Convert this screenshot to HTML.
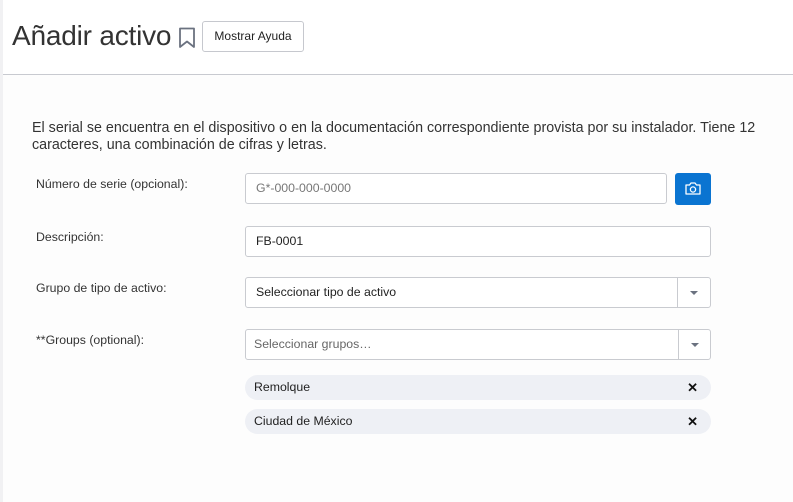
<!DOCTYPE html>
<html><head><meta charset="utf-8"><style>
body{margin:0;width:793px;height:502px;background:#fdfdfd;font-family:"Liberation Sans",sans-serif;position:relative;overflow:hidden;color:#333}
.hdr{position:absolute;left:0;top:0;width:793px;height:74px;background:#fff;border-bottom:1px solid #c8cad0}
.side{position:absolute;left:0;top:0;width:3px;height:502px;background:#f1f1f3}
h1{position:absolute;left:12px;top:20px;margin:0;font-weight:normal;font-size:28px;color:#333;letter-spacing:-0.2px}
.btn{position:absolute;left:202px;top:21px;width:100px;height:29px;border:1px solid #c6c8ce;border-radius:3px;background:#fff;font-size:12px;line-height:29px;text-align:center;color:#222}
p{position:absolute;left:32px;top:120px;margin:0;font-size:14.3px;line-height:17px;color:#333;white-space:nowrap}
.lbl{position:absolute;left:36px;font-size:12.3px;color:#333}
.in{position:absolute;left:245px;height:31px;border:1px solid #c9cbd0;border-radius:3px;background:#fff;font-size:12.3px;line-height:29px;padding-left:10px;box-sizing:border-box}
.dd{position:absolute;right:0;top:0;width:32px;height:29px;border-left:1px solid #c9cbd0}
.dd:after{content:"";position:absolute;left:12px;top:13px;border-left:4px solid transparent;border-right:4px solid transparent;border-top:4px solid #6b7280}
.cam{position:absolute;left:675px;top:173px;width:36px;height:32px;background:#0a74d1;border-radius:3px}
.chip{position:absolute;left:245px;width:466px;height:25px;border-radius:13px;background:#eef0f5;font-size:12.3px;line-height:25px;color:#222}
.chip span{position:absolute;left:9px}
.chip b{position:absolute;right:13px;top:0;font-size:13px;color:#111}
</style></head><body>
<div class="hdr"></div><div class="side"></div>
<h1>Añadir activo</h1>
<svg style="position:absolute;left:178px;top:27px" width="18" height="22" viewBox="0 0 18 22"><path d="M2 1.5h14v18.5l-7-5.5-7 5.5z" fill="none" stroke="#6b7280" stroke-width="1.8" stroke-linejoin="round"/></svg>
<div class="btn">Mostrar Ayuda</div>
<p>El serial se encuentra en el dispositivo o en la documentación correspondiente provista por su instalador. Tiene 12<br>caracteres, una combinación de cifras y letras.</p>
<div class="lbl" style="top:177px">Número de serie (opcional):</div>
<div class="in" style="top:173px;width:422px;color:#777">G*-000-000-0000</div>
<div class="cam"><svg width="36" height="32" viewBox="0 0 36 32"><path d="M11 12h3.5l1.5-2h4l1.5 2h3.5v9h-14z" fill="none" stroke="#fff" stroke-width="1.3" stroke-linejoin="round"/><circle cx="18" cy="16.5" r="2.6" fill="none" stroke="#fff" stroke-width="1.3"/></svg></div>
<div class="lbl" style="top:230px">Descripción:</div>
<div class="in" style="top:226px;width:466px;color:#222">FB-0001</div>
<div class="lbl" style="top:281px">Grupo de tipo de activo:</div>
<div class="in" style="top:277px;width:466px;color:#222">Seleccionar tipo de activo<div class="dd"></div></div>
<div class="lbl" style="top:333px">**Groups (optional):</div>
<div class="in" style="top:329px;width:466px;color:#666;padding-left:8px">Seleccionar grupos…<div class="dd" style="width:31px"></div></div>
<div class="chip" style="top:375px"><span>Remolque</span><b>✕</b></div>
<div class="chip" style="top:409px"><span>Ciudad de México</span><b>✕</b></div>
</body></html>
